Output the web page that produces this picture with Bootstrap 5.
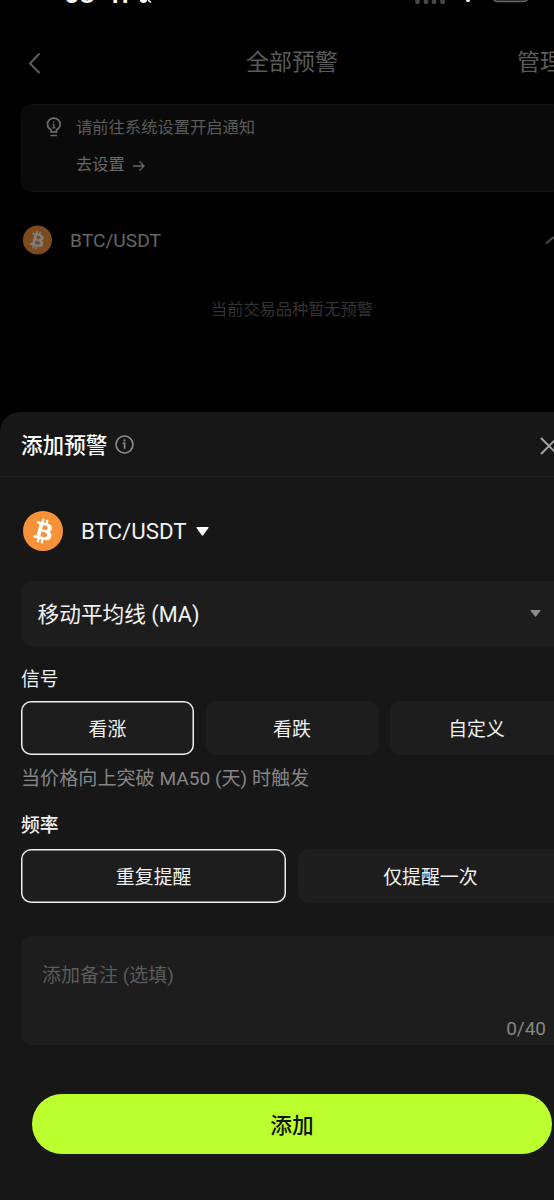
<!DOCTYPE html>
<html lang="zh-CN" data-bs-theme="dark">
<head>
<meta charset="utf-8">
<meta name="viewport" content="width=device-width, initial-scale=1">
<title>添加预警</title>
<link href="https://cdn.jsdelivr.net/npm/bootstrap@5.3.0/dist/css/bootstrap.min.css" rel="stylesheet">
<style>
  html, body { height: 1200px; overflow: hidden; }
  body { background: #000; font-family: Roboto, "Noto Sans CJK SC", sans-serif; line-height: 1.25; }
  svg { display: block; flex: none; }
  .screen { width: 584px; height: 1200px; }
  .backdrop-page { height: 412px; color: #5a5a5a; }
  .status { height: 8px; padding-left: 64px; }
  .clock { height: 3px; font: 700 23px/24px Inter, sans-serif; color: #fff; gap: 14px; align-items: flex-end; }
  .clock span { height: 24px; margin-bottom: -4px; }
  .status-mute { margin-left: 10px; }
  .status-right { margin-right: 30px; }
  .topbar { height: 96px; padding: 14px 21px 0 27px; }
  .topbar > * { flex: 1 1 0; }
  .topbar-title { font-size: 23px; }
  .note { margin: 0 21px; height: 88px; border: 1px solid #111; border-radius: 11px; background: #0a0a0a; font-size: 16.3px; padding: 13px 0 0 24px; gap: 14px; }
  .note svg { margin-top: -1px; }
  .note-go { color: #686868; margin-top: 17px; gap: 8px; }
  .note-go svg { margin-top: 0; }
  .pair-dim { height: 40px; margin: 28px 21px 0 22px; font-size: 19.2px; gap: 18px; color: #666; }
  .pair-dim span { padding-top: 1px; }
  .empty { margin-top: 40px; font-size: 16.2px; color: #333; }
  .sheet { height: 788px; background: #171717; border-radius: 20px 20px 0 0; color: #f2f2f2; }
  .sheet-head { height: 65px; border-bottom: 1px solid #222; padding: 0 22px 0 21px; }
  .sheet-head h1 { font-size: 21.6px; font-weight: 500; margin: 0; padding-top: 3px; }
  .sheet-body { padding: 34px 21px 0; }
  .pair { height: 40px; padding-left: 1.5px; gap: 18.5px; font-size: 22.3px; }
  .pair span { padding-top: 2px; }
  .pair .caret { margin-left: -9.500px; }
  .field { background: #1d1d1d; border-radius: 10px; }
  .picker { height: 65px; margin-top: 30px; padding: 0 22px 0 16.5px; font-size: 21.7px; }
  .picker span { padding-top: 2px; }
  .lbl { font-size: 18.8px; line-height: 24px; }
  .lbl-signal { margin: 22px 0 9px; }
  .lbl-freq { margin: 23px 0 11px; font-weight: 500; }
  .opts { gap: 11.5px; }
  .opt { flex: 1 1 0; height: 54px; padding: 3px 0 0; border: 0; border-radius: 10px; background: #1d1d1d; color: #f0f0f0; font-size: 18.9px; }
  .opt.on { box-shadow: inset 0 0 0 1.5px #eee; }
  .hint { font-size: 19.1px; line-height: 24px; color: #858585; margin-top: 12px; }
  .memo { height: 109px; margin-top: 33px; padding: 28px 17px 4px 21px; font-size: 19px; color: #5c5c5c; }
  .counter { color: #858585; font-size: 19px; }
  .submit { height: 60px; margin: 49px 11px 0; padding: 3px 0 0; border: 0; border-radius: 30px; background: #bbff2f; color: #0c1200; font-size: 21.7px; font-weight: 500; }
</style>
</head>
<body>
<svg width="0" height="0" class="d-none">
  <symbol id="btc" viewBox="0 0 32 32"><path d="M23.189 14.02c.314-2.096-1.283-3.223-3.465-3.975l.708-2.84-1.728-.43-.69 2.765c-.454-.114-.92-.22-1.385-.326l.695-2.783L15.596 6l-.708 2.839c-.376-.086-.746-.17-1.104-.26l.002-.009-2.384-.595-.46 1.846s1.283.294 1.256.312c.7.175.826.638.805 1.006l-.806 3.235c.048.012.11.03.18.057l-.183-.045-1.13 4.532c-.086.212-.303.531-.793.41.018.025-1.256-.313-1.256-.313l-.858 1.978 2.25.561c.418.105.828.215 1.231.318l-.715 2.872 1.727.43.708-2.84c.472.127.93.245 1.378.357l-.706 2.828 1.728.43.715-2.866c2.948.558 5.164.333 6.097-2.333.752-2.146-.037-3.385-1.588-4.192 1.13-.26 1.98-1.003 2.207-2.538zm-3.95 5.538c-.533 2.147-4.148.986-5.32.695l.95-3.805c1.172.293 4.929.872 4.37 3.11zm.535-5.569c-.487 1.953-3.495.96-4.47.717l.86-3.45c.975.243 4.118.696 3.61 2.733z"/></symbol>
</svg>
<div class="screen">
  <div class="backdrop-page d-flex flex-column">
    <div class="status d-flex overflow-hidden">
      <div class="clock d-flex overflow-hidden"><span>08</span><span>11</span></div>
      <svg class="status-mute" width="20" height="4" viewBox="0 0 20 4" fill="#fff"><path d="M2 0h7c0 2-1.500 3-3.500 3S2 2 2 0z"/><path d="M10 0l3 2.500" stroke="#fff" stroke-width="1.500"/></svg>
      <svg class="status-right ms-auto" width="140" height="4" viewBox="414 0 140 4">
        <path d="M417.500 -2v4M426 -2v4M434 -2v4M442.500 -2v4" stroke="#484848" stroke-width="4.500" stroke-linecap="round"/>
        <circle cx="468" cy="0" r="2" fill="#fff"/>
        <rect x="493" y="-12" width="35" height="13.500" rx="4" fill="#222" stroke="#666" stroke-width="1.500"/>
      </svg>
    </div>
    <div class="topbar d-flex align-items-center">
      <div><svg width="14" height="22" viewBox="0 0 14 22" fill="none" stroke="#5e5e5e" stroke-width="2"><path d="M12.500 1.500L3 11.500l9.500 9.500"/></svg></div>
      <div class="topbar-title text-center ps-0" style="margin-left:-6px">全部预警</div>
      <div class="topbar-title text-end">管理</div>
    </div>
    <div class="note d-flex">
      <svg width="16" height="20" viewBox="0 0 16 20" fill="none" stroke="#6a6a6a" stroke-width="1.700"><path d="M5 14.800v-2.200C2.700 11.500 1.500 9.600 1.500 7.400a6.300 6.300 0 0 1 12.600 0c0 2.200-1.200 4.100-3.500 5.200v2.200zM4.500 18.500h6.500"/><path d="M6.500 7.300h1.400v3.500M6.300 10.800h3.200" stroke-width="1.300"/><circle cx="7.700" cy="4.900" r=".8" fill="#6a6a6a" stroke="none"/></svg>
      <div>
        <div class="tip">请前往系统设置开启通知</div>
        <div class="note-go d-flex align-items-center">去设置
          <svg width="12" height="12" viewBox="0 0 12 12" fill="none" stroke="#686868" stroke-width="1.300"><path d="M0 6h11M6.500 1.500L11 6l-4.500 4.500"/></svg>
        </div>
      </div>
    </div>
    <div class="pair-dim d-flex align-items-center">
      <svg width="30" height="30" viewBox="0 0 32 32"><circle cx="16.500" cy="16" r="15.500" fill="#7c4a1c"/><use href="#btc" fill="#7f7f7f"/></svg>
      <span>BTC/USDT</span>
      <svg class="ms-auto" width="18" height="10" viewBox="0 0 18 10" fill="none" stroke="#4c4c4c" stroke-width="1.800"><path d="M1 8.500l7-6 7 6"/></svg>
    </div>
    <div class="empty text-center">当前交易品种暂无预警</div>
  </div>

  <section class="sheet">
    <div class="sheet-head d-flex align-items-center">
      <h1>添加预警</h1>
      <svg class="ms-2" width="19" height="19" viewBox="0 0 19 19" fill="none" stroke="#8f8f8f" stroke-width="1.600"><circle cx="9.500" cy="9.500" r="8.500"/><path d="M7.600 8.300h2v5.500"/><circle cx="9.500" cy="5.400" r="1.100" fill="#8f8f8f" stroke="none"/></svg>
      <svg class="ms-auto mt-1" width="22" height="18" viewBox="0 0 22 18" fill="none" stroke="#a8a8a8" stroke-width="1.900"><path d="M1 1l16 16M17 1L1 17"/></svg>
    </div>
    <div class="sheet-body">
      <div class="pair d-flex align-items-center">
        <svg width="40" height="40" viewBox="0 0 32 32"><circle cx="16" cy="16" r="16" fill="#f79239"/><use href="#btc" fill="#fff"/></svg>
        <span>BTC/USDT</span>
        <svg class="caret" width="13" height="9" viewBox="0 0 13 9" fill="#fff"><path d="M1 0h11q1 0 .4.900L7.200 8.300q-.7.900-1.400 0L.6.900Q0 0 1 0z"/></svg>
      </div>
      <div class="field picker d-flex align-items-center justify-content-between">
        <span>移动平均线 (MA)</span>
        <svg width="11" height="7" viewBox="0 0 11 7" fill="#8c8c8c"><path d="M1 0h9q1 0 .3.900L6 6.400q-.5.500-1 0L.7.900Q0 0 1 0z"/></svg>
      </div>
      <div class="lbl lbl-signal">信号</div>
      <div class="opts d-flex">
        <button class="opt on">看涨</button><button class="opt">看跌</button><button class="opt">自定义</button>
      </div>
      <div class="hint">当价格向上突破 MA50 (天) 时触发</div>
      <div class="lbl lbl-freq">频率</div>
      <div class="opts d-flex">
        <button class="opt on">重复提醒</button><button class="opt">仅提醒一次</button>
      </div>
      <div class="field memo d-flex flex-column justify-content-between">
        <span>添加备注 (选填)</span>
        <span class="counter text-end">0/40</span>
      </div>
      <div class="d-grid"><button class="submit">添加</button></div>
    </div>
  </section>
</div>
<script src="https://cdn.jsdelivr.net/npm/bootstrap@5.3.0/dist/js/bootstrap.bundle.min.js"></script>
</body>
</html>
